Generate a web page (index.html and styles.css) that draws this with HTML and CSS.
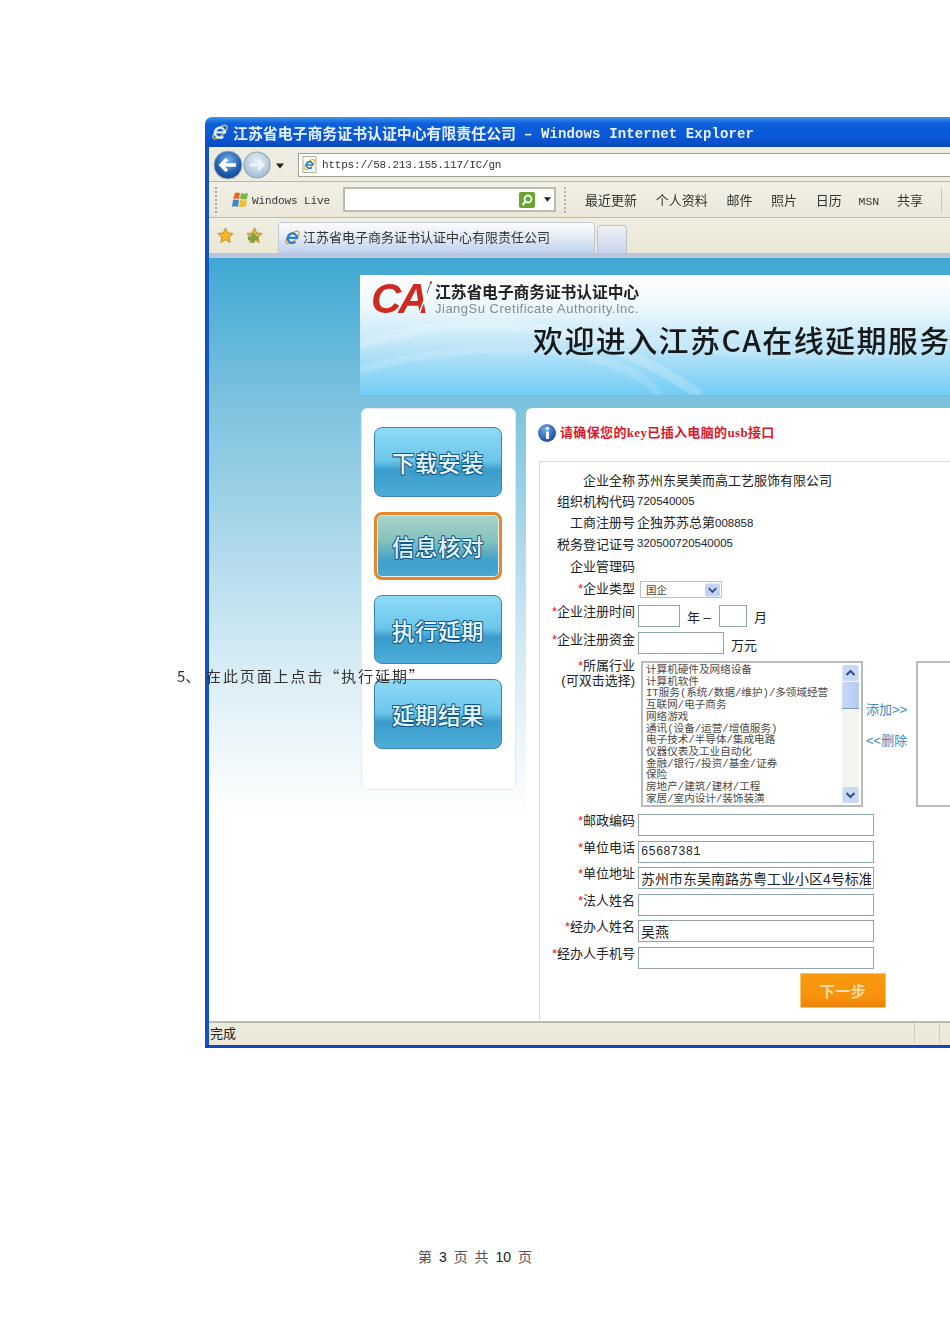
FILE: index.html
```html
<!DOCTYPE html>
<html lang="zh-CN">
<head>
<meta charset="utf-8">
<title>第 3 页</title>
<link rel="stylesheet" href="styles.css">
</head>
<body>
<div class="sheet">
  <div class="ie">
    <div class="title-bar">
      <svg class="ie-logo" viewBox="0 0 20 20"><ellipse cx="10" cy="10" rx="10" ry="4.2" transform="rotate(-42 10 10)" fill="none" stroke="#c9b56a" stroke-width="1.6"/><path d="M5 10.5h10.5A5.6 5.6 0 1 0 13.6 15" fill="none" stroke="#dcecfa" stroke-width="2.6"/></svg>
      <span class="title-cn">江苏省电子商务证书认证中心有限责任公司</span>
      <span class="title-en">– Windows Internet Explorer</span>
    </div>
    <div class="frame">
      <div class="addr-row">
        <svg class="nav" viewBox="0 0 72 30">
          <defs>
            <radialGradient id="back" cx=".5" cy=".35" r=".7"><stop offset="0" stop-color="#7fb4ea"/><stop offset=".6" stop-color="#1f62b4"/><stop offset="1" stop-color="#123f80"/></radialGradient>
            <radialGradient id="fwd" cx=".5" cy=".35" r=".7"><stop offset="0" stop-color="#e6eff8"/><stop offset="1" stop-color="#9db8d4"/></radialGradient>
          </defs>
          <circle cx="44" cy="15" r="13" fill="url(#fwd)" stroke="#9aa5ad" stroke-width="1.2"/>
          <path d="M37 15h13M45 10l5 5-5 5" fill="none" stroke="#eef4fa" stroke-width="3"/>
          <circle cx="15" cy="15" r="14" fill="url(#back)" stroke="#a5b1bb" stroke-width="1"/>
          <path d="M23 15H8M14 9l-6 6 6 6" fill="none" stroke="#fff" stroke-width="3.4"/>
          <path d="M63 13.5h8l-4 5z" fill="#222"/>
        </svg>
        <div class="addr-box">
          <svg class="page-icon" viewBox="0 0 16 18"><path d="M1 .5h14v17H1z" fill="#fdfdf5" stroke="#a8a890"/><ellipse cx="8" cy="9" rx="7" ry="3" transform="rotate(-42 8 9)" fill="none" stroke="#c9a93a"/><path d="M4.500 9.500h7A3.500 3.500 0 1 0 10.500 12" fill="none" stroke="#2d7cc8" stroke-width="1.800"/></svg>
          <span class="mono">https://58.213.155.117/IC/gn</span>
        </div>
      </div>
      <div class="tool-row">
        <span class="grip"></span>
        <svg class="flag" viewBox="0 0 18 18"><path d="M4 2c2-1 3 0 5 0L8 8C6 8 5 7 2 8z" fill="#e8622a"/><path d="M10 2c2 1 4 1 7 0l-1 6c-3 1-5 0-7 0z" fill="#7ab648"/><path d="M2 9c2-1 4 0 6 0l-1 7c-2-1-4-1-6 0z" fill="#3f86d0"/><path d="M9 9c2 0 4 1 7 0l-1 6c-3 1-5 1-7 1z" fill="#f2bd2c"/></svg>
        <span class="mono live">Windows Live</span>
        <div class="search-box">
          <svg class="go" viewBox="0 0 16 16"><rect width="16" height="16" rx="2" fill="#6aa62e"/><circle cx="9" cy="7" r="3.500" fill="none" stroke="#fff" stroke-width="1.800"/><path d="M6.500 9.500L3.500 13" stroke="#fff" stroke-width="2"/></svg>
          <svg class="caret" viewBox="0 0 8 5"><path d="M0 0h8L4 5z" fill="#222"/></svg>
        </div>
        <span class="dots"></span>
        <nav class="links">
          <span>最近更新</span><span>个人资料</span><span>邮件</span><span>照片</span><span>日历</span><span class="mono msn">MSN</span><span>共享</span>
        </nav>
        <span class="tool-end"></span>
      </div>
      <div class="tab-row">
        <svg class="star" viewBox="0 0 18 18"><path d="M9 1l2.400 5.300 5.600.6-4.200 3.800 1.200 5.700L9 13.500l-5 2.900 1.200-5.700L1 6.900l5.600-.6z" fill="#f5b62a" stroke="#c98a1a"/></svg>
        <svg class="star star-add" viewBox="0 0 18 18"><path d="M9 1l2.400 5.300 5.600.6-4.200 3.800 1.200 5.700L9 13.500l-5 2.900 1.200-5.700L1 6.900l5.600-.6z" fill="#e6b84a" stroke="#b08a2a"/><path d="M6 7h4v3h3v4H9v3H6v-3H2v-4h4z" fill="#7aa23e"/></svg>
        <div class="tab">
          <svg class="tab-icon" viewBox="0 0 20 20"><ellipse cx="10" cy="10" rx="10" ry="4.200" transform="rotate(-42 10 10)" fill="none" stroke="#c9a93a" stroke-width="1.500"/><path d="M5 10.500h10.500A5.600 5.600 0 1 0 13.600 15" fill="none" stroke="#2d7cc8" stroke-width="2.600"/></svg>
          <span class="tab-label">江苏省电子商务证书认证中心有限责任公司</span>
        </div>
        <div class="tab-new"></div>
      </div>
      <div class="view">
        <header class="banner">
          <svg class="waves" viewBox="0 0 590 120" preserveAspectRatio="none"><path d="M0 70C120 30 240 50 340 120" fill="none" stroke="#fff" stroke-opacity=".2" stroke-width="10"/><path d="M0 95C130 60 260 70 300 120" fill="none" stroke="#fff" stroke-opacity=".14" stroke-width="8"/><path d="M200 60C320 70 460 90 590 70" fill="none" stroke="#fff" stroke-opacity=".15" stroke-width="12"/></svg>
          <div class="brand">
            <span class="ca">CA</span>
            <svg class="spark" viewBox="0 0 14 34"><path d="M1 33L9 12" stroke="#fff" stroke-width="1.500"/><path d="M9 12L13 1" stroke="#444" stroke-width=".8"/><circle cx="13" cy="1.500" r="1.200" fill="#cf2a20"/></svg>
            <div class="brand-text">
              <div class="brand-cn">江苏省电子商务证书认证中心</div>
              <div class="brand-en">JiangSu Cretificate Authority.Inc.</div>
            </div>
          </div>
          <h1 class="welcome">欢迎进入江苏CA在线延期服务</h1>
        </header>
        <div class="columns">
          <aside class="side">
            <div class="btn">下载安装</div>
            <div class="btn active">信息核对</div>
            <div class="btn short">执行延期</div>
            <div class="btn">延期结果</div>
          </aside>
          <main class="panel">
            <div class="notice">
              <svg class="info" viewBox="0 0 18 18"><defs><radialGradient id="inf" cx=".4" cy=".3" r=".8"><stop offset="0" stop-color="#6aa8ea"/><stop offset="1" stop-color="#123f98"/></radialGradient></defs><circle cx="9" cy="9" r="9" fill="url(#inf)"/><circle cx="9.500" cy="4.500" r="1.800" fill="#fff"/><path d="M8 7.500h3V15H8z" fill="#fff"/></svg>
              <span class="notice-text">请确保您的key已插入电脑的usb接口</span>
            </div>
            <form class="form">
              <div class="row r21"><label class="lab">企业全称</label><span class="val">苏州东吴美而高工艺服饰有限公司</span></div>
              <div class="row r21"><label class="lab">组织机构代码</label><span class="val num">720540005</span></div>
              <div class="row r21"><label class="lab">工商注册号</label><span class="val">企独苏苏总第<span class="num">008858</span></span></div>
              <div class="row r22"><label class="lab">税务登记证号</label><span class="val num">320500720540005</span></div>
              <div class="row r22"><label class="lab">企业管理码</label></div>
              <div class="row r23"><label class="lab"><i class="req">*</i>企业类型</label>
                <div class="select"><span>国企</span><svg class="sel-btn" viewBox="0 0 16 14"><rect width="16" height="14" rx="2" fill="#c3d3f4"/><path d="M4 5l4 4 4-4" fill="none" stroke="#33508a" stroke-width="2"/></svg></div>
              </div>
              <div class="row date"><label class="lab up12"><i class="req">*</i>企业注册时间</label>
                <input class="field w42" type="text"><span class="unit u-year">年 –</span><input class="field w28" type="text"><span class="unit u-month">月</span>
              </div>
              <div class="row cap"><label class="lab up10"><i class="req">*</i>企业注册资金</label>
                <input class="field w86" type="text"><span class="unit u-wan">万元</span>
              </div>
              <div class="row industry">
                <label class="lab two"><i class="req">*</i>所属行业<br>(可双击选择)</label>
                <div class="listbox">
                  <ul class="options">
                    <li>计算机硬件及网络设备</li><li>计算机软件</li><li>IT服务(系统/数据/维护)/多领域经营</li><li>互联网/电子商务</li><li>网络游戏</li><li>通讯(设备/运营/增值服务)</li><li>电子技术/半导体/集成电路</li><li>仪器仪表及工业自动化</li><li>金融/银行/投资/基金/证券</li><li>保险</li><li>房地产/建筑/建材/工程</li><li>家居/室内设计/装饰装潢</li>
                  </ul>
                  <div class="scroll">
                    <svg class="sb-btn" viewBox="0 0 16 16"><rect width="16" height="16" rx="2" fill="#c8d8f6"/><path d="M4 10l4-4 4 4" fill="none" stroke="#33508a" stroke-width="2"/></svg>
                    <div class="thumb"></div>
                    <svg class="sb-btn" viewBox="0 0 16 16"><rect width="16" height="16" rx="2" fill="#c8d8f6"/><path d="M4 6l4 4 4-4" fill="none" stroke="#33508a" stroke-width="2"/></svg>
                  </div>
                </div>
                <div class="moves"><span>添加&gt;&gt;</span><span>&lt;&lt;删除</span></div>
                <div class="listbox-empty"></div>
              </div>
              <div class="row text first"><label class="lab"><i class="req">*</i>邮政编码</label><input class="field wide" type="text"></div>
              <div class="row text"><label class="lab"><i class="req">*</i>单位电话</label><input class="field wide phone" type="text" value="65687381"></div>
              <div class="row text"><label class="lab"><i class="req">*</i>单位地址</label><input class="field wide big" type="text" value="苏州市东吴南路苏粤工业小区4号标准厂房"></div>
              <div class="row text"><label class="lab"><i class="req">*</i>法人姓名</label><input class="field wide" type="text"></div>
              <div class="row text"><label class="lab"><i class="req">*</i>经办人姓名</label><input class="field wide big" type="text" value="吴燕"></div>
              <div class="row text"><label class="lab"><i class="req">*</i>经办人手机号</label><input class="field wide" type="text"></div>
              <div class="next">下一步</div>
            </form>
          </main>
        </div>
      </div>
      <div class="status">
        <span class="done">完成</span>
        <span class="pane p1"></span>
        <span class="pane p2"></span>
      </div>
    </div>
    <div class="bottom-edge"></div>
  </div>
  <p class="step"><span class="step-no">5、</span>在此页面上点击“执行延期”</p>
  <footer class="foot">第 <b>3</b> 页 共 <b>10</b> 页</footer>
</div>
</body>
</html>
```

FILE: styles.css
```css
* { box-sizing: border-box; }
html, body { margin: 0; padding: 0; background: #fff; }
body { width: 950px; height: 1344px; overflow: hidden; font-family: "Liberation Sans", "Noto Sans CJK SC", sans-serif; font-size: 13px; color: #222; }
.sheet { position: relative; width: 950px; height: 1344px; padding: 117px 0 0 205px; overflow: hidden; }
.ie { width: 745px; height: 931px; display: flex; flex-direction: column; overflow: hidden; filter: blur(0.4px); }
.mono { font-family: "Liberation Mono", "Noto Sans CJK SC", monospace; }

.title-bar { height: 30px; flex: none; display: flex; align-items: center; padding-left: 6px; border-radius: 7px 0 0 0; background: linear-gradient(#3f95e6 0, #0d5fdc 22%, #0a57d4 70%, #0a49bc 100%); color: #e8f1fb; white-space: nowrap; }
.ie-logo { width: 18px; height: 18px; margin-right: 4px; flex: none; }
.title-cn { font: 700 14.9px "Noto Sans CJK SC", sans-serif; }
.title-en { font: 700 14px "Liberation Mono", monospace; margin-left: 8px; padding-top: 3px; letter-spacing: .12px; }

.frame { flex: 1; display: flex; flex-direction: column; border-left: 4px solid #1451c4; min-height: 0; }
.addr-row { height: 35px; flex: none; display: flex; align-items: center; padding: 1px 0 0 4px; background: #eeece0; border-bottom: 1px solid #b9b7a8; }
.nav { width: 72px; height: 30px; flex: none; }
.addr-box { flex: 1; height: 24px; margin-left: 13px; display: flex; align-items: center; padding-left: 3px; background: #fff; border: 1px solid #a3a397; border-right: 0; }
.page-icon { width: 15px; height: 17px; margin-right: 5px; }
.addr-box .mono { font-size: 11px; letter-spacing: -.2px; padding-top: 1px; color: #333; }

.tool-row { height: 36px; flex: none; display: flex; align-items: center; background: linear-gradient(#f2f0e6, #ebe8da); border-bottom: 1px solid #bcbaa8; }
.grip { width: 2px; height: 26px; margin-left: 6px; border-left: 2px dotted #a8a696; }
.flag { width: 18px; height: 18px; margin-left: 14px; flex: none; }
.live { font-size: 11px; letter-spacing: -.1px; margin-left: 3px; padding-top: 3px; width: 78px; color: #333; }
.search-box { width: 213px; height: 25px; margin-left: 13px; background: #fff; border: 2px solid #bdbbaa; display: flex; justify-content: flex-end; align-items: center; gap: 9px; padding-right: 3px; }
.go { width: 16px; height: 16px; }
.caret { width: 7px; height: 5px; flex: none; }
.dots { width: 2px; height: 26px; margin-left: 8px; border-left: 2px dotted #b5b3a2; }
.links { display: flex; gap: 18.700px; margin-left: 19px; align-items: center; color: #333; white-space: nowrap; }
.msn { font-size: 11.500px; padding-top: 3px; margin: 0 -1px 0 -2px; }
.tool-end { width: 1px; height: 26px; margin-left: 18px; background: #c8c6b6; }

.tab-row { height: 40px; flex: none; display: flex; align-items: flex-end; padding: 0 0 5px 8px; background: linear-gradient(#f0eee2, #ebe7d6); position: relative; border-bottom: 5px solid #b9c6de; }
.star { width: 17px; height: 17px; align-self: flex-start; margin-top: 9px; flex: none; }
.star-add { margin-left: 12px; }
.tab { width: 317px; height: 31px; margin: 0 0 -5px 15px; display: flex; align-items: center; padding: 0 0 2px 5px; gap: 3px; border: 1px solid #c3c9d2; border-bottom: 0; border-radius: 5px 5px 0 0; background: linear-gradient(#fbfcfd, #e4ecf6 45%, #bed0ee); color: #333; white-space: nowrap; }
.tab-icon { width: 17px; height: 17px; flex: none; }
.tab-label { margin-left: -1px; padding-bottom: 2px; }
.tab-new { width: 30px; height: 28px; margin: 0 0 -5px 2px; border: 1px solid #bcc3cc; border-bottom: 0; border-radius: 4px 4px 0 0; background: linear-gradient(#eef2f6, #c6d4ea); }

.view { flex: 1; min-height: 0; padding: 17px 0 0 151px; background: linear-gradient(#3ea8d4 0, #7cc2de 142px, #dceef6 420px, #fff 560px); overflow: hidden; }
.banner { width: 590px; height: 120px; position: relative; overflow: hidden; background: linear-gradient(#fff 0, #eef8fd 25%, #c5e8f8 55%, #8dd6f6 85%, #72cdf4 100%); }
.waves { position: absolute; inset: 0; width: 590px; height: 120px; }
.brand { position: absolute; left: 11px; top: 3px; display: flex; }
.ca { width: 64px; font: italic 700 42px/42px "Liberation Sans", sans-serif; letter-spacing: -3px; color: #cf2a20; }
.spark { position: absolute; left: 47px; top: 3px; width: 14px; height: 34px; }
.brand-text { margin-top: 4px; }
.brand-cn { font: 700 15.800px/20px "Noto Sans CJK SC", sans-serif; color: #222; white-space: nowrap; letter-spacing: -.1px; }
.brand-en { font: 13px/14px "Liberation Sans", sans-serif; color: #7d8c96; letter-spacing: .5px; white-space: nowrap; }
.welcome { position: absolute; left: 173px; top: 42px; margin: 0; font: 500 30px/44px "Noto Sans CJK SC", sans-serif; letter-spacing: 1.400px; color: #16181a; white-space: nowrap; }

.columns { display: flex; margin: 13px 0 0 1px; align-items: flex-start; }
.side { width: 155px; height: 382px; flex: none; padding: 18px 0 0 13px; display: flex; flex-direction: column; gap: 15px; background: #fff; border: 1px solid #e6eaec; border-radius: 6px; }
.btn { width: 128px; height: 70px; flex: none; display: flex; align-items: center; justify-content: center; border: 1px solid #3a86ad; border-radius: 8px; background: linear-gradient(#8edbf8 0, #6cc6ea 48%, #3a9ccb 62%, #4fadd8 100%); font: 500 22.500px "Noto Sans CJK SC", sans-serif; letter-spacing: .5px; color: #e4f5fd; text-shadow: .8px 0 #0f5a8a, -.8px 0 #0f5a8a, 0 .8px #0f5a8a, 0 -.8px #0f5a8a, .8px .8px #0f5a8a, -.8px -.8px #0f5a8a, .8px -.8px #0f5a8a, -.8px .8px #0f5a8a; margin-left: -1px; }
.btn.short { height: 69px; }
.btn.active { height: 68px; border: 3px solid #e8862a; box-shadow: inset 0 0 0 1px #e6f2f4; background: linear-gradient(#a8d4cc 0, #86c3bc 40%, #3f9fca 75%, #4aa8d4 100%); }

.panel { flex: 1; height: 613px; margin-left: 10px; padding: 16px 0 0 12px; background: #fff; border-radius: 6px 0 0 0; }
.notice { height: 18px; display: flex; align-items: center; gap: 4px; font: 700 13px "Liberation Serif", "Noto Sans CJK SC", serif; letter-spacing: .35px; color: #d8192a; white-space: nowrap; }
.notice-text { padding-bottom: 3px; }
.info { width: 18px; height: 18px; flex: none; }

.form { margin: 19px 0 0 1px; padding-top: 8px; height: 560px; border: 1px solid #c9e0ea; border-right: 0; border-bottom: 0; }
.row { display: flex; align-items: center; white-space: nowrap; }
.r21 { height: 21px; padding-bottom: 2px; }
.r22 { height: 22px; padding-bottom: 2px; }
.r23 { height: 23px; padding-bottom: 2px; }
.lab { width: 95px; flex: none; text-align: right; margin-right: 3px; color: #222; }
.req { font-style: normal; color: #d8192a; }
.val { margin-left: -1px; color: #222; }
.num { font-size: 11.500px; }
.select { width: 82px; height: 17px; margin: 4px 0 0 2px; display: flex; align-items: center; justify-content: space-between; padding: 0 1px 0 5px; background: #fff; border: 1px solid #b9c2c8; font-size: 10.500px; color: #444; }
.sel-btn { width: 15px; height: 14px; }
.field { height: 22px; margin: 0; padding: 0 2px; background: #fff; border: 1px solid #8ea5b0; border-radius: 0; font: 13px "Liberation Sans", "Noto Sans CJK SC", sans-serif; color: #222; outline: 0; }
.date, .cap { height: 22px; margin-top: 5px; }
.w42 { width: 42px; }
.w28 { width: 28px; }
.w86 { width: 86px; }
.up12 { padding-bottom: 12px; }
.up10 { padding-bottom: 10px; }
.unit { color: #222; }
.u-year { width: 38px; padding: 0 0 0 7px; margin-right: 1px; }
.u-month { padding: 0 0 0 7px; }
.u-wan { padding: 2px 0 0 7px; }
.industry { height: 150px; margin-top: 3px; align-items: flex-start; }
.two { line-height: 15px; padding-top: 1px; }
.listbox { width: 222px; height: 146px; margin: 4px 0 0 3px; display: flex; justify-content: space-between; padding: 2px; background: #fff; border: 2px solid #b4bcc0; flex: none; }
.options { list-style: none; margin: 0; padding: 0 0 0 1px; font: 10.600px/11.700px "Liberation Mono", "Noto Sans CJK SC", monospace; color: #4a4a4a; }
.scroll { width: 17px; display: flex; flex-direction: column; background: #f5f5ef; }
.sb-btn { width: 17px; height: 16px; flex: none; }
.thumb { height: 27px; margin: 1px 0 auto; background: linear-gradient(90deg, #c9d9f8, #b4caf2); border-bottom: 1px solid #7f9ac8; }
.moves { width: 53px; flex: none; display: flex; flex-direction: column; gap: 12px; padding: 42px 0 0 3px; color: #3a8ac0; }
.listbox-empty { width: 80px; height: 146px; margin-top: 4px; background: #fff; border: 2px solid #b4bcc0; flex: none; }
.text { height: 26.500px; align-items: flex-start; }
.text .lab { line-height: 14px; }
.first { margin-top: 7px; }
.wide { width: 236px; }
.phone { font: 12px "Liberation Mono", monospace; letter-spacing: .25px; }
.big { font-size: 14px; }
.next { width: 86px; height: 35px; margin-left: 260px; display: flex; align-items: center; justify-content: center; background: linear-gradient(#f89a10 0, #f7920c 70%, #ee8208 100%); border: 1px solid #f7c66e; font: 700 15px "Noto Sans CJK SC", sans-serif; letter-spacing: .5px; color: #f9dca4; }

.status { height: 24px; flex: none; display: flex; align-items: center; padding: 0 0 3px 1px; background: linear-gradient(#edebdd, #ebe8d8); border-top: 2px solid #bcbaa8; color: #222; }
.done { width: 704px; flex: none; }
.pane { width: 25px; height: 20px; flex: none; border-left: 1px solid #cfccba; }
.bottom-edge { height: 3px; flex: none; background: #1345c0; }

.step { position: absolute; left: 177px; top: 665px; margin: 0; font: 15px/22px "Noto Sans CJK SC", sans-serif; letter-spacing: 1.900px; color: #333; white-space: nowrap; }
.step-no { display: inline-block; width: 29px; letter-spacing: 0; }
.foot { position: absolute; left: 0; right: 0; top: 1248px; text-align: center; font: 14px/18px "Liberation Sans", "Noto Sans CJK SC", sans-serif; word-spacing: 3px; color: #555; }
.foot b { font-weight: 400; color: #222; }
```
